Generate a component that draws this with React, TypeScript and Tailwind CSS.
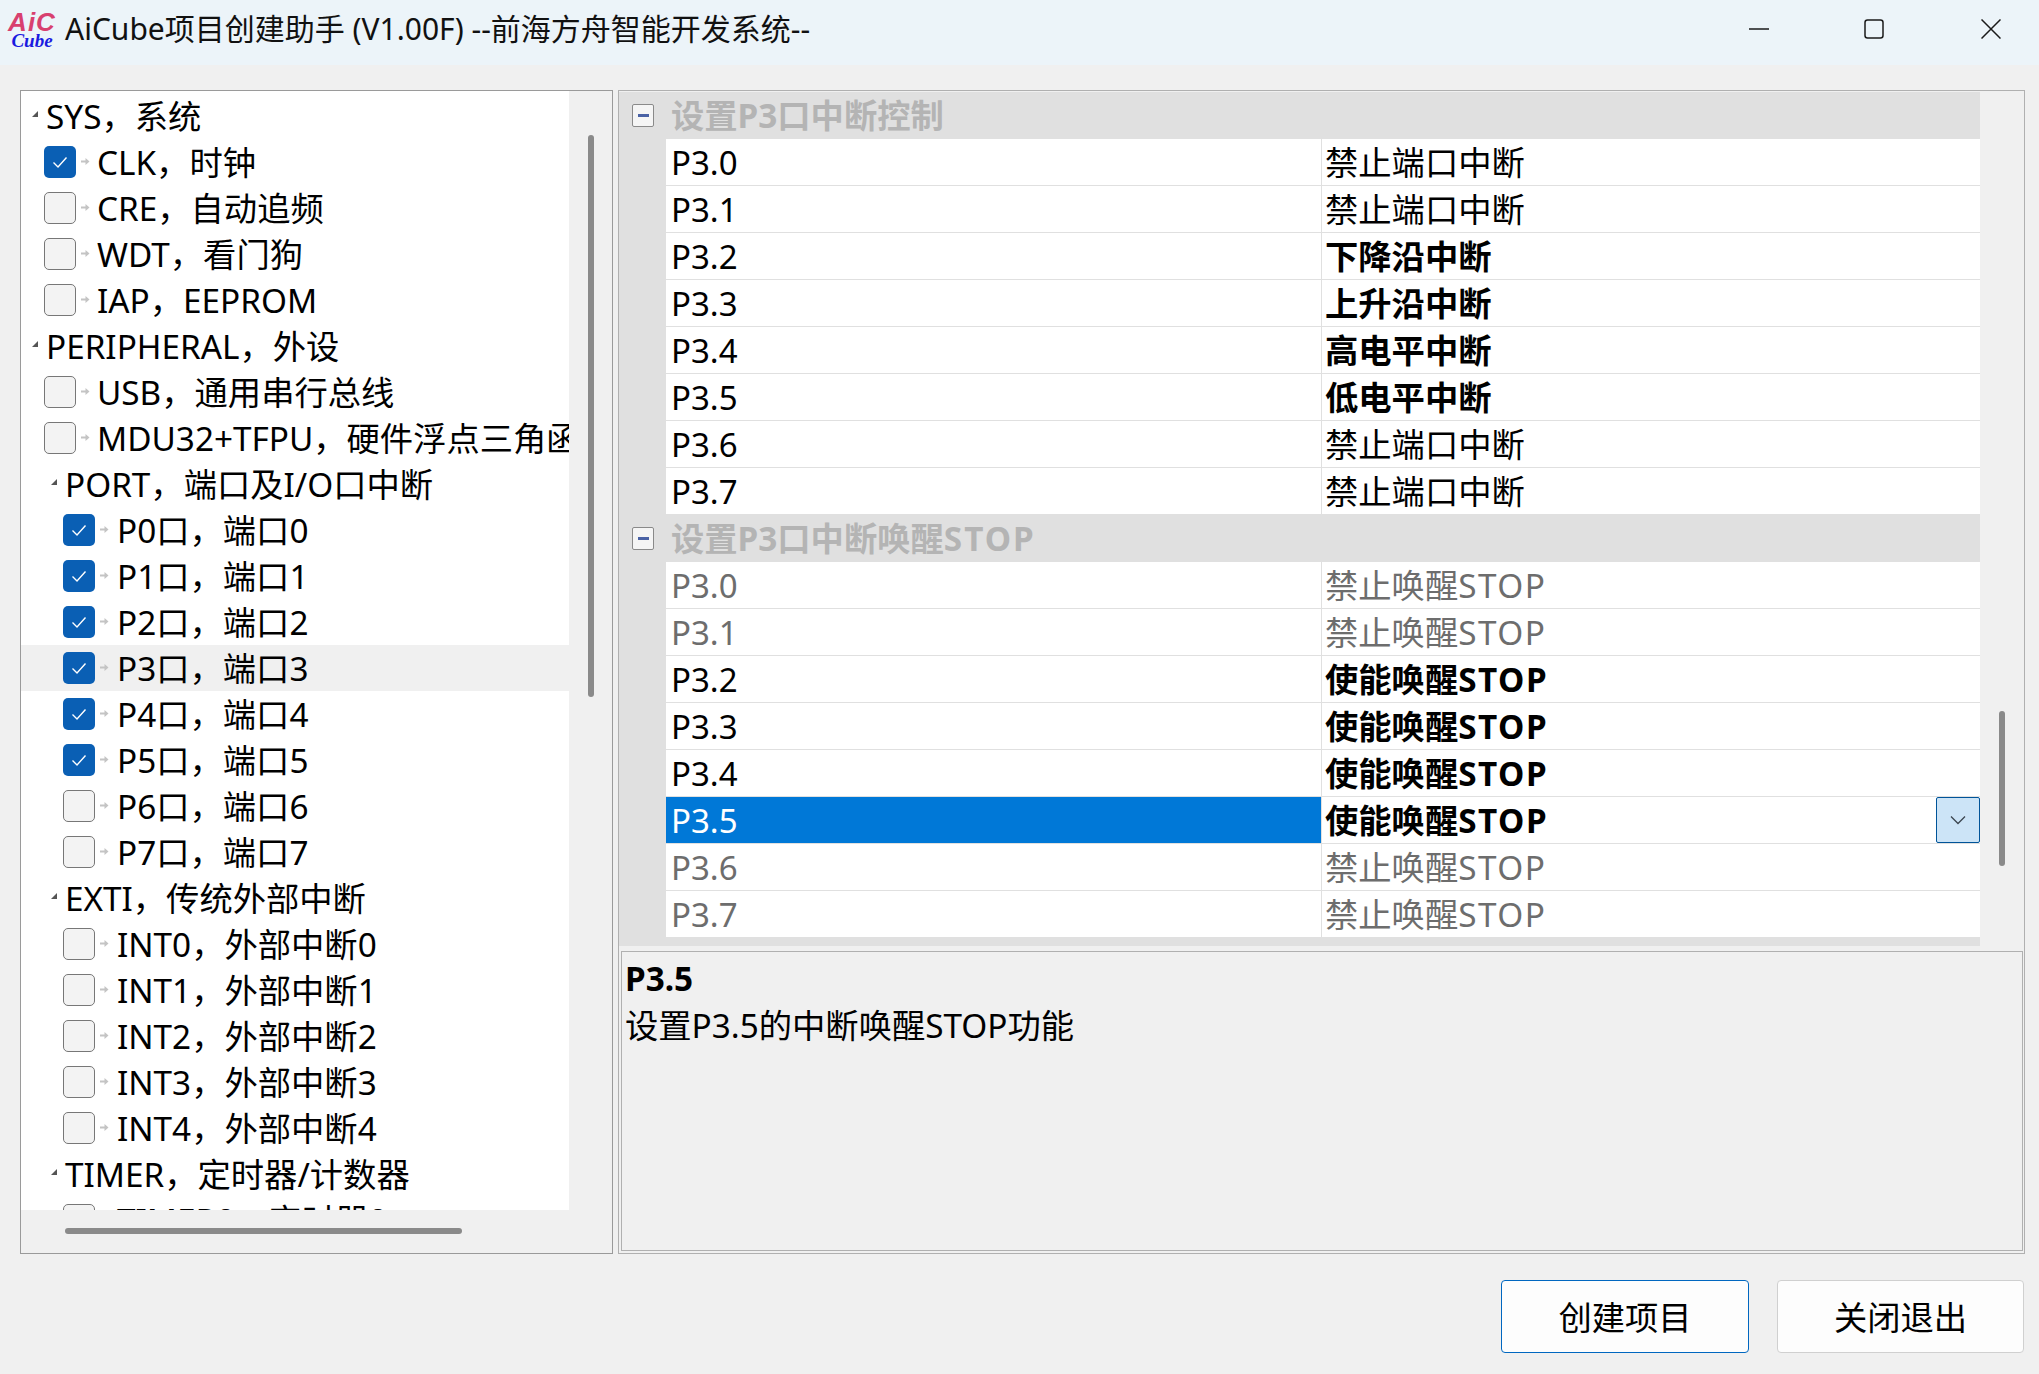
import { Fragment } from "react";

const FONT = "font-['Noto_Sans','Noto_Sans_CJK_SC',sans-serif]";

type TreeRow = { label: string; level: 0 | 1 | 2; group?: boolean; checked?: boolean; active?: boolean };

const treeRows: TreeRow[] = [
  { label: "SYS，系统", level: 0, group: true },
  { label: "CLK，时钟", level: 1, checked: true },
  { label: "CRE，自动追频", level: 1 },
  { label: "WDT，看门狗", level: 1 },
  { label: "IAP，EEPROM", level: 1 },
  { label: "PERIPHERAL，外设", level: 0, group: true },
  { label: "USB，通用串行总线", level: 1 },
  { label: "MDU32+TFPU，硬件浮点三角函数", level: 1 },
  { label: "PORT，端口及I/O口中断", level: 1, group: true },
  { label: "P0口，端口0", level: 2, checked: true },
  { label: "P1口，端口1", level: 2, checked: true },
  { label: "P2口，端口2", level: 2, checked: true },
  { label: "P3口，端口3", level: 2, checked: true, active: true },
  { label: "P4口，端口4", level: 2, checked: true },
  { label: "P5口，端口5", level: 2, checked: true },
  { label: "P6口，端口6", level: 2 },
  { label: "P7口，端口7", level: 2 },
  { label: "EXTI，传统外部中断", level: 1, group: true },
  { label: "INT0，外部中断0", level: 2 },
  { label: "INT1，外部中断1", level: 2 },
  { label: "INT2，外部中断2", level: 2 },
  { label: "INT3，外部中断3", level: 2 },
  { label: "INT4，外部中断4", level: 2 },
  { label: "TIMER，定时器/计数器", level: 1, group: true },
  { label: "TIMER0，定时器0", level: 2 },
];

type GridRow = { name: string; value: string; stop?: boolean; bold?: boolean; dim?: boolean; selected?: boolean };

const sections: { title: string; stop?: boolean; rows: GridRow[] }[] = [
  {
    title: "设置P3口中断控制",
    rows: [
      { name: "P3.0", value: "禁止端口中断" },
      { name: "P3.1", value: "禁止端口中断" },
      { name: "P3.2", value: "下降沿中断", bold: true },
      { name: "P3.3", value: "上升沿中断", bold: true },
      { name: "P3.4", value: "高电平中断", bold: true },
      { name: "P3.5", value: "低电平中断", bold: true },
      { name: "P3.6", value: "禁止端口中断" },
      { name: "P3.7", value: "禁止端口中断" },
    ],
  },
  {
    title: "设置P3口中断唤醒",
    stop: true,
    rows: [
      { name: "P3.0", value: "禁止唤醒", stop: true, dim: true },
      { name: "P3.1", value: "禁止唤醒", stop: true, dim: true },
      { name: "P3.2", value: "使能唤醒", stop: true, bold: true },
      { name: "P3.3", value: "使能唤醒", stop: true, bold: true },
      { name: "P3.4", value: "使能唤醒", stop: true, bold: true },
      { name: "P3.5", value: "使能唤醒", stop: true, bold: true, selected: true },
      { name: "P3.6", value: "禁止唤醒", stop: true, dim: true },
      { name: "P3.7", value: "禁止唤醒", stop: true, dim: true },
    ],
  },
];

function Checkbox({ checked }: { checked?: boolean }) {
  if (checked) {
    return (
      <span className="flex h-[32px] w-[32px] shrink-0 items-center justify-center rounded-[5px] bg-[#0a5fb4]">
        <svg width="18" height="18" viewBox="0 0 18 18" fill="none" stroke="#fff" strokeWidth="1.4">
          <path d="M2.5 9.5 L7 14 L15.5 4.5" />
        </svg>
      </span>
    );
  }
  return <span className="h-[32px] w-[32px] shrink-0 rounded-[5px] border-[1.5px] border-[#777] bg-[#f3f3f3]" />;
}

function TreeItem({ row }: { row: TreeRow }) {
  const indent = row.level === 0 ? "pl-[9px]" : row.level === 1 ? "pl-[23px]" : "pl-[42px]";
  return (
    <div className={`flex h-[46px] shrink-0 items-center whitespace-nowrap ${indent} ${row.active ? "bg-[#f0f0f0]" : ""}`}>
      {row.group ? (
        <>
          <svg
            width="8"
            height="8"
            viewBox="0 0 8 8"
            className={`mr-[7px] mb-[4px] shrink-0 ${row.level === 1 ? "ml-[6px]" : "ml-[1px]"}`}
          >
            <path d="M7 1 V7 H1 Z" fill="#555" />
          </svg>
          <span className="pt-px text-[33.3px] leading-none text-black">{row.label}</span>
        </>
      ) : (
        <>
          <Checkbox checked={row.checked} />
          <svg width="9" height="9" viewBox="0 0 9 9" className="mx-[5px] mb-[2px] shrink-0">
            <path d="M0 3.5 H4.5 V1 L8.5 4.5 L4.5 8 V5.5 H0 Z" fill="#c4c4c4" />
          </svg>
          <span className={`pt-px text-[33.3px] leading-none text-black ${row.level === 1 ? "ml-[2px]" : "ml-[3px]"}`}>
            {row.label}
          </span>
        </>
      )}
    </div>
  );
}

function GridSection({ title, stop, rows }: { title: string; stop?: boolean; rows: GridRow[] }) {
  return (
    <Fragment>
      <div className="flex h-[47px] shrink-0 items-center bg-[#e0e0e0]">
        <span className="ml-[13px] flex h-[23px] w-[22px] items-center justify-center rounded-[2px] border border-[#8a8a8a] bg-[#f5f5f5]">
          <span className="h-[3px] w-[11px] bg-[#4a62a5]" />
        </span>
        <span className="ml-[17px] text-[33.3px] leading-none font-bold text-[#b4b4b4]">
          {title}
          {stop && <span className="tracking-[2px]">STOP</span>}
        </span>
      </div>
      {rows.map((r) => (
        <div key={title + r.name} className="flex h-[47px] shrink-0 bg-[#e0e0e0] pl-[47px]">
          <div
            className={`flex w-[655px] items-center border-b border-[#e0e0e0] pl-[5px] text-[33px] leading-none ${
              r.selected ? "bg-[#0078d7] text-white" : r.dim ? "bg-white text-[#6d6d6d]" : "bg-white text-black"
            }`}
          >
            {r.name}
          </div>
          <div className="flex flex-1 items-center border-b border-l border-[#e0e0e0] bg-white pl-[3px]">
            <span
              className={`pt-[2px] text-[33.3px] leading-none ${
                r.bold ? "font-bold text-black" : r.dim ? "text-[#6d6d6d]" : "text-black"
              }`}
            >
              {r.value}
              {r.stop && <span className="tracking-[1.5px]">STOP</span>}
            </span>
            {r.selected && (
              <span className="ml-auto flex h-[46px] w-[44px] items-center justify-center rounded-[2px] border border-[#005499] bg-[#cce4f7]">
                <svg width="16" height="10" viewBox="0 0 16 10" fill="none" stroke="#3c4650" strokeWidth="1.3">
                  <path d="M1 1.5 L8 8.5 L15 1.5" />
                </svg>
              </span>
            )}
          </div>
        </div>
      ))}
    </Fragment>
  );
}

export default function App() {
  return (
    <div className={`flex h-[1374px] w-[2039px] flex-col overflow-hidden bg-[#f0f0f0] ${FONT}`}>
      {/* Title bar */}
      <div className="flex h-[65px] shrink-0 items-center bg-[#ecf4f9] pr-[38px] pb-[7px] pl-[11px]">
        <div className="flex w-[42px] shrink-0 flex-col items-center">
          <span className="font-['Liberation_Sans'] text-[26px] leading-[22px] font-bold tracking-[1px] text-[#d8406f] italic">
            AiC
          </span>
          <span className="font-['Liberation_Serif'] text-[19px] leading-[15px] font-bold text-[#1a1ae0] italic">Cube</span>
        </div>
        <span className="ml-[12px] text-[30px] leading-none whitespace-nowrap text-[#111]">
          AiCube项目创建助手 (V1.00F) --前海方舟智能开发系统--
        </span>
        <svg width="20" height="20" viewBox="0 0 20 20" className="ml-auto" stroke="#1a1a1a" strokeWidth="1.5" fill="none">
          <path d="M0 10 H20" />
        </svg>
        <svg width="20" height="20" viewBox="0 0 20 20" className="ml-[95px]" stroke="#1a1a1a" strokeWidth="1.5" fill="none">
          <rect x="1" y="1" width="18" height="18" rx="2.5" />
        </svg>
        <svg width="20" height="20" viewBox="0 0 20 20" className="ml-[97px]" stroke="#1a1a1a" strokeWidth="1.5" fill="none">
          <path d="M0.5 0.5 L19.5 19.5 M19.5 0.5 L0.5 19.5" />
        </svg>
      </div>

      <div className="flex flex-col pt-[25px] pr-[15px] pl-[20px]">
        <div className="flex gap-[5px]">
          {/* Tree panel */}
          <div className="flex h-[1164px] w-[593px] shrink-0 flex-col border border-[#9a9a9a]">
            <div className="flex h-[1119px] shrink-0">
              <div className="flex w-[548px] shrink-0 flex-col overflow-hidden bg-white pt-[2px]">
                {treeRows.map((row) => (
                  <TreeItem key={row.label} row={row} />
                ))}
              </div>
              <div className="mt-[44px] ml-[19px] h-[562px] w-[6px] rounded-[3px] bg-[#8a8a8a]" />
            </div>
            <div className="mt-[18px] ml-[44px] h-[6px] w-[397px] rounded-[3px] bg-[#8a8a8a]" />
          </div>

          {/* Property grid panel */}
          <div className="flex h-[1164px] w-[1407px] shrink-0 flex-col border border-[#b0b0b0]">
            <div className="flex h-[855px] shrink-0">
              <div className="flex h-[855px] w-[1361px] shrink-0 flex-col overflow-hidden pt-px">
                {sections.map((s) => (
                  <GridSection key={s.title} title={s.title} stop={s.stop} rows={s.rows} />
                ))}
                <div className="flex-1 bg-[#e0e0e0]" />
              </div>
              <div className="mt-[620px] ml-[19px] h-[155px] w-[6px] rounded-[3px] bg-[#8a8a8a]" />
            </div>
            <div className="mt-[5px] mr-px ml-[2px] flex h-[300px] flex-col border border-[#b0b0b0] px-[3px] pt-[3px]">
              <span className="text-[33.3px] leading-[47px] font-bold text-black">P3.5</span>
              <span className="text-[33.3px] leading-[47px] text-black">设置P3.5的中断唤醒STOP功能</span>
            </div>
          </div>
        </div>

        {/* Buttons */}
        <div className="mt-[26px] flex justify-end gap-[28px]">
          <button className="flex h-[73px] w-[248px] items-center justify-center rounded-[4px] border border-[#0067c0] bg-[#fdfdfd] pt-[3px] text-[33.3px] text-black">
            创建项目
          </button>
          <button className="flex h-[73px] w-[247px] items-center justify-center rounded-[4px] border border-[#d0d0d0] bg-[#fdfdfd] pt-[3px] text-[33.3px] text-black">
            关闭退出
          </button>
        </div>
      </div>
    </div>
  );
}
